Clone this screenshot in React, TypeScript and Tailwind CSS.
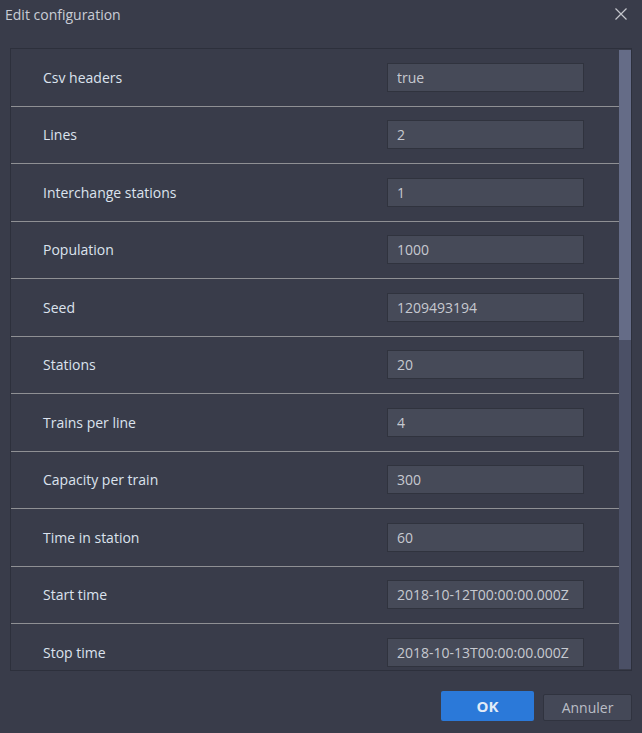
import React from 'react';

const fields: { label: string; value: string }[] = [
  { label: 'Csv headers', value: 'true' },
  { label: 'Lines', value: '2' },
  { label: 'Interchange stations', value: '1' },
  { label: 'Population', value: '1000' },
  { label: 'Seed', value: '1209493194' },
  { label: 'Stations', value: '20' },
  { label: 'Trains per line', value: '4' },
  { label: 'Capacity per train', value: '300' },
  { label: 'Time in station', value: '60' },
  { label: 'Start time', value: '2018-10-12T00:00:00.000Z' },
  { label: 'Stop time', value: '2018-10-13T00:00:00.000Z' },
];

const App = () => {
  return (
    <div className="flex flex-col w-[642px] h-[733px] bg-[#393c4a] font-['Open_Sans',sans-serif] overflow-hidden">
      {/* Header */}
      <div className="flex items-center justify-between h-[28px] pl-[5px] pr-[15px]">
        <span className="text-[14px] text-[#c9cdd6]">Edit configuration</span>
        <svg width="12" height="12" viewBox="0 0 12 12" className="text-[#c4c6cc]">
          <path d="M0.5 0.5 L11.5 11.5 M11.5 0.5 L0.5 11.5" stroke="currentColor" strokeWidth="1.2" />
        </svg>
      </div>

      {/* Fields panel */}
      <div className="flex mx-[10px] mt-[20px] h-[623px] border border-[#2d303c]">
        <div className="flex-1 overflow-hidden">
          {fields.map((f) => (
            <div
              key={f.label}
              className="flex items-center h-[57.5px] border-b border-[#8f9094] pl-[32px]"
            >
              <span className="flex-1 text-[14px] text-[#dce3ee]">{f.label}</span>
              <input
                readOnly
                value={f.value}
                className="w-[197px] h-[29px] mr-[35px] pl-[9px] bg-[#464a58] border border-[#30333e] text-[14px] text-[#c6c9d0] outline-none font-['Open_Sans',sans-serif]"
              />
            </div>
          ))}
        </div>
        {/* Scrollbar */}
        <div className="w-[12px] py-[1px] flex flex-col">
          <div className="flex-1 bg-[#4b5066] flex flex-col">
            <div className="h-[290px] bg-[#656c87]" />
          </div>
        </div>
      </div>

      {/* Footer */}
      <div className="flex justify-end items-end gap-[9px] pr-[10px] pt-[20px]">
        <button className="w-[93px] h-[30px] rounded-[2px] bg-[#2b79d9] text-[15px] font-bold text-[#e2ebf7]">
          OK
        </button>
        <button className="w-[89px] h-[27px] rounded-[2px] bg-[#444857] border border-[#30333f] text-[14px] text-[#babec6]">
          Annuler
        </button>
      </div>
    </div>
  );
};

export default App;
